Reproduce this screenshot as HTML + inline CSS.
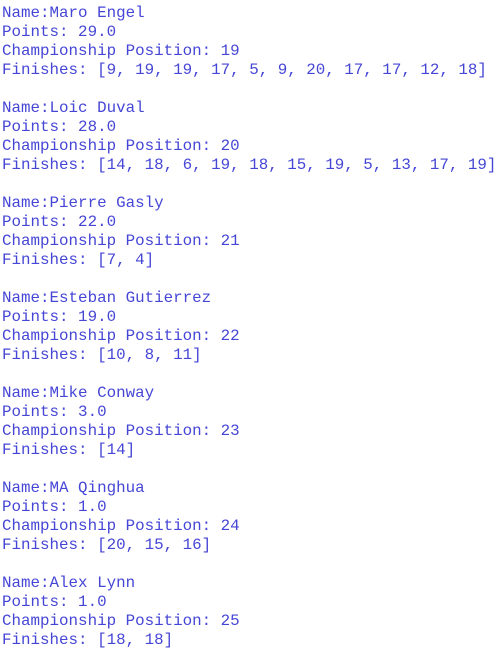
<!DOCTYPE html>
<html><head><meta charset="utf-8"><style>
html,body{margin:0;padding:0;background:#fff;width:497px;height:652px;overflow:hidden}
pre{margin:0;position:absolute;left:2px;top:4px;font-family:"Liberation Mono",monospace;font-size:15.85px;line-height:19px;color:#4646d6;letter-spacing:0}
</style></head><body><pre>Name:Maro Engel
Points: 29.0
Championship Position: 19
Finishes: [9, 19, 19, 17, 5, 9, 20, 17, 17, 12, 18]

Name:Loic Duval
Points: 28.0
Championship Position: 20
Finishes: [14, 18, 6, 19, 18, 15, 19, 5, 13, 17, 19]

Name:Pierre Gasly
Points: 22.0
Championship Position: 21
Finishes: [7, 4]

Name:Esteban Gutierrez
Points: 19.0
Championship Position: 22
Finishes: [10, 8, 11]

Name:Mike Conway
Points: 3.0
Championship Position: 23
Finishes: [14]

Name:MA Qinghua
Points: 1.0
Championship Position: 24
Finishes: [20, 15, 16]

Name:Alex Lynn
Points: 1.0
Championship Position: 25
Finishes: [18, 18]</pre></body></html>
